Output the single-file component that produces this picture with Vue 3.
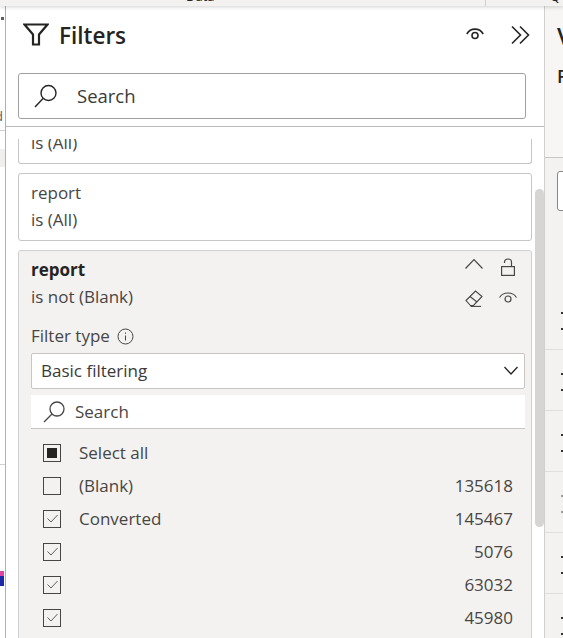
<script setup>
const rows = [
	{ label: 'Select all', count: '', state: 'partial' },
	{ label: '(Blank)', count: '135618', state: 'off' },
	{ label: 'Converted', count: '145467', state: 'on' },
	{ label: '', count: '5076', state: 'on' },
	{ label: '', count: '63032', state: 'on' },
	{ label: '', count: '45980', state: 'on' }
];
const sideRows = [false, false, false, true, false, false];
</script>

<template>
	<div class="page">
		<div class="top-bar">
			<span class="top-data">Data</span>
			<span class="top-sep"></span>
			<span class="top-q">Q</span>
		</div>
		<div class="main">
			<div class="left-strip">
				<div class="left-dot"></div>
				<div class="left-d">d</div>
				<div class="left-line"></div>
				<div class="left-grey"></div>
				<div class="left-line second"></div>
				<div class="left-pink"></div>
				<div class="left-blue"></div>
			</div>

			<div class="filters">
				<div class="head">
					<svg class="funnel" width="26" height="23" viewBox="0 0 26 23" fill="none" stroke="#252423" stroke-width="2.2">
						<path d="M1.500 1.500H24.500L16 11.500V21.500H10V11.500Z" />
					</svg>
					<div class="head-title">Filters</div>
					<svg class="head-eye" width="18" height="13" viewBox="0 0 18 13" fill="none" stroke="#252423" stroke-width="1.6">
						<path d="M0.800 7C4.500 0.500 13.500 0.500 17.200 7" />
						<circle cx="9" cy="8.500" r="3" />
					</svg>
					<svg class="head-chev" width="19" height="20" viewBox="0 0 19 20" fill="none" stroke="#252423" stroke-width="1.6">
						<path d="M1 1.500L9.500 10L1 18.500" />
						<path d="M9 1.500L17.500 10L9 18.500" />
					</svg>
				</div>
				<div class="search-box">
					<svg class="search-icon" width="23" height="24" viewBox="0 0 23 24" fill="none" stroke="#252423" stroke-width="1.4">
						<circle cx="14.500" cy="9" r="7.500" />
						<path d="M9 14.500L1 23" />
					</svg>
					<span class="search-text">Search</span>
				</div>
				<div class="head-line"></div>

				<div class="list">
					<div class="card clipped">
						<div class="card-text">is (All)</div>
					</div>
					<div class="card">
						<div class="card-text">report</div>
						<div class="card-text">is (All)</div>
					</div>
					<div class="card open">
						<div class="open-head">
							<div class="open-title">
								<div class="card-name">report</div>
								<div class="card-text">is not (Blank)</div>
							</div>
							<div class="open-icons">
								<svg width="18" height="11" viewBox="0 0 18 11" fill="none" stroke="#484644" stroke-width="1.2">
									<path d="M0.500 10.500L9 1.500L17.500 10.500" />
								</svg>
								<svg width="14" height="18" viewBox="0 0 14 18" fill="none" stroke="#484644" stroke-width="1.2">
									<rect x="0.600" y="8.600" width="12.800" height="8.800" />
									<path d="M3.500 5V4C3.500 0 10.500 0 10.500 4V8.500" />
								</svg>
								<svg width="18" height="17" viewBox="0 0 18 17" fill="none" stroke="#484644" stroke-width="1.1">
									<path d="M1 10.500L10.500 1L17 6.500L8.500 15.500H5.500Z" />
									<path d="M5 6.500L12 12" />
									<path d="M5.500 16.400H16" />
								</svg>
								<svg class="open-eye" width="18" height="12" viewBox="0 0 18 12" fill="none" stroke="#484644" stroke-width="1.2">
									<path d="M0.500 6.500C4 0.500 14 0.500 17.500 6.500" />
									<circle cx="9" cy="8" r="3" />
								</svg>
							</div>
						</div>
						<div class="type-label">
							<span>Filter type</span>
							<svg width="17" height="17" viewBox="0 0 17 17" fill="none" stroke="#484644" stroke-width="1">
								<circle cx="8.500" cy="8.500" r="7.500" />
								<path d="M8.500 7.500V12.500" />
								<path d="M8.500 4.500V5.800" />
							</svg>
						</div>
						<div class="select">
							<span>Basic filtering</span>
							<svg width="14" height="9" viewBox="0 0 14 9" fill="none" stroke="#252423" stroke-width="1.3">
								<path d="M0.500 1L7 8L13.500 1" />
							</svg>
						</div>
						<div class="inner-search">
							<svg width="22" height="22" viewBox="0 0 22 22" fill="none" stroke="#484644" stroke-width="1.3">
								<circle cx="14" cy="8" r="7" />
								<path d="M9 13L1 21" />
							</svg>
							<span>Search</span>
						</div>
						<div class="rows">
							<div class="row" v-for="row in rows" :key="row.count + row.label">
								<div class="check" :class="row.state">
									<svg v-if="row.state === 'on'" width="11" height="9" viewBox="0 0 11 9" fill="none" stroke="#605e5c" stroke-width="1">
										<path d="M0.500 4.500L4 8L10.500 1" />
									</svg>
									<div v-if="row.state === 'partial'" class="check-fill"></div>
								</div>
								<span class="row-label">{{ row.label }}</span>
								<span class="row-count">{{ row.count }}</span>
							</div>
						</div>
					</div>
					<div class="scroll-thumb"></div>
				</div>
			</div>

			<div class="side">
				<div class="side-top">
					<div class="side-v">V</div>
					<div class="side-f">F</div>
				</div>
				<div class="side-body">
					<div class="side-input"></div>
					<div class="side-row" v-for="(dim, i) in sideRows" :key="i" :class="{ dim }">
						<i></i><i></i>
					</div>
				</div>
			</div>
		</div>
	</div>
</template>

<style>
html, body {
	margin: 0;
	background: #fff;
}
</style>

<style scoped>
.page {
	width: 563px;
	height: 638px;
	overflow: hidden;
	display: flex;
	flex-direction: column;
	font-family: "Open Sans", "Noto Sans", sans-serif;
	color: #3b3a39;
}

.top-bar {
	position: relative;
	z-index: 2;
	flex: none;
	display: flex;
	height: 6px;
	overflow: hidden;
	background: #f3f2f1;
	box-shadow: 0 1px 4px rgba(0, 0, 0, 0.18);
	font-size: 13px;
	line-height: 13px;
	color: #252423;
}

.top-data {
	margin: -10px 0 0 186px;
	width: 299px;
}

.top-sep {
	width: 1px;
	background: #d2d0ce;
}

.top-q {
	margin: -10px 0 0 64px;
}

.main {
	flex: 1;
	display: flex;
	min-height: 0;
}

.left-strip {
	flex: none;
	width: 5px;
	display: flex;
	flex-direction: column;
	overflow: hidden;
	border-right: 1px solid #b3b0ad;
}

.left-dot {
	width: 3px;
	height: 3px;
	margin: 11px 0 0 1px;
	background: #605e5c;
}

.left-d {
	margin: 88px 0 0 -5px;
	height: 16px;
	font-size: 13px;
	line-height: 16px;
	color: #605e5c;
}

.left-line {
	flex: none;
	height: 1px;
	margin-top: 6px;
	background: #d2d0ce;
}

.left-grey {
	height: 18px;
	margin-top: 18px;
	background: #f0efee;
}

.left-line.second {
	margin-top: 297px;
}

.left-pink {
	height: 5px;
	margin-top: 106px;
	width: 4px;
	background: #e044a7;
}

.left-blue {
	height: 10px;
	width: 4px;
	background: #1c2aa8;
}

.filters {
	position: relative;
	flex: none;
	width: 538px;
	display: flex;
	flex-direction: column;
	border-right: 1px solid #d2d0ce;
	background: #fff;
}

.head {
	display: flex;
	align-items: center;
	height: 57px;
	padding: 0 14px 0 17px;
}

.head-title {
	flex: 1;
	margin: 2px 0 0 10px;
	font-size: 22.500px;
	font-weight: 600;
	color: #252423;
}

.head-eye {
	margin: -2px 27px 0 0;
}

.search-box {
	display: flex;
	align-items: center;
	height: 44px;
	margin: 10px 18px 0 12px;
	padding-left: 15px;
	border: 1px solid #a19f9d;
	border-radius: 3px;
	font-size: 18.500px;
	color: #3b3a39;
}

.search-icon {
	margin-right: 20px;
}

.search-text {
	margin-top: -2px;
}

.head-line {
	height: 1px;
	margin-top: 7px;
	background: #bdbbb9;
}

.list {
	position: relative;
	flex: 1;
	min-height: 0;
	margin-top: 12px;
	padding: 0 12px;
	overflow: hidden;
}

.card {
	width: 514px;
	box-sizing: border-box;
	margin-bottom: 9px;
	padding: 5px 12px 7px;
	border: 1px solid #c8c6c4;
	border-radius: 3px;
}

.card.clipped {
	height: 25px;
	padding-top: 0;
	border-top: none;
	border-radius: 0 0 3px 3px;
	overflow: hidden;
}

.card.clipped .card-text {
	margin-top: -10px;
}

.card-text {
	font-size: 17px;
	line-height: 27px;
	color: #484644;
}

.card-name {
	font-size: 17px;
	font-weight: 700;
	line-height: 27px;
	color: #252423;
}

.open {
	padding: 5px 6px 0 12px;
	background: #f3f2f1;
	border-color: #d2d0ce;
	height: 420px;
}

.open-head {
	display: flex;
	justify-content: space-between;
}

.open-icons {
	display: grid;
	grid-template-columns: 18px 18px;
	column-gap: 16px;
	row-gap: 11px;
	align-items: start;
	justify-items: center;
	margin: 2px 8px 0 0;
}

.open-eye {
	margin-top: 1px;
}

.type-label {
	display: flex;
	align-items: center;
	gap: 7px;
	margin-top: 14px;
	font-size: 17px;
	line-height: 24px;
	color: #484644;
}

.select {
	display: flex;
	align-items: center;
	justify-content: space-between;
	box-sizing: border-box;
	height: 36px;
	margin-top: 5px;
	padding: 0 6px 2px 9px;
	background: #fff;
	border: 1px solid #c8c6c4;
	border-radius: 2px;
	font-size: 17px;
	color: #3b3a39;
}

.inner-search {
	display: flex;
	align-items: center;
	height: 33px;
	margin-top: 6px;
	padding-left: 12px;
	background: #fff;
	border-bottom: 1px solid #c8c6c4;
	font-size: 17px;
	color: #484644;
}

.inner-search svg {
	margin-right: 10px;
}

.rows {
	margin-top: 7px;
}

.row {
	display: flex;
	align-items: center;
	height: 33px;
	padding: 0 12px;
	font-size: 17px;
	color: #484644;
}

.check {
	flex: none;
	display: flex;
	align-items: center;
	justify-content: center;
	width: 16px;
	height: 16px;
	border: 1px solid #484644;
	margin-right: 18px;
}

.check-fill {
	width: 10px;
	height: 10px;
	background: #252423;
}

.row-label {
	flex: 1;
}

.scroll-thumb {
	position: absolute;
	top: 50px;
	right: 0;
	width: 9px;
	height: 338px;
	border-radius: 5px;
	background: #d6d5d3;
}

.side {
	flex: 1;
	display: flex;
	flex-direction: column;
	overflow: hidden;
}

.side-top {
	flex: none;
	height: 151px;
	padding-left: 12px;
	background: #f7f6f5;
	border-bottom: 1px solid #c8c6c4;
}

.side-v {
	margin-top: 15px;
	font-size: 24px;
	font-weight: 600;
	line-height: 30px;
	color: #252423;
}

.side-f {
	margin-top: 13px;
	font-size: 18px;
	font-weight: 600;
	line-height: 24px;
	color: #252423;
}

.side-body {
	flex: none;
	background: #f3f2f1;
	padding-top: 13px;
}

.side-input {
	width: 20px;
	height: 38px;
	margin: 0 0 78px 12px;
	border: 1px solid #8a8886;
	border-radius: 3px;
	background: #fff;
}

.side-row {
	box-sizing: border-box;
	height: 61px;
	padding-top: 23px;
	border-bottom: 1px solid #e1dfdd;
	display: flex;
	flex-direction: column;
	gap: 14px;
	align-items: flex-start;
}

.side-row i {
	display: block;
	width: 2px;
	height: 2px;
	margin-left: 16px;
	background: #323130;
}

.side-row.dim i {
	background: #a19f9d;
}
</style>
